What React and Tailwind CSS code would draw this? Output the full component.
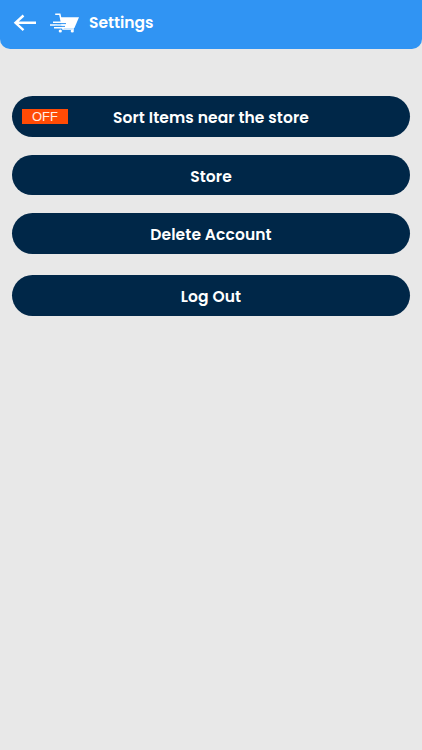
import React, { useState } from 'react';

const actions = [
  { label: 'Store', className: 'mt-[18px]' },
  { label: 'Delete Account', className: 'mt-[18px]' },
  { label: 'Log Out', className: 'mt-[21.5px]' },
];

function BackArrow() {
  return (
    <svg width="24" height="18" viewBox="0 0 24 18" fill="none" stroke="white" strokeWidth="2.4">
      <path d="M23 8.8H3M10.5 1.5L2.5 8.8l8 7.3" />
    </svg>
  );
}

function CartLogo() {
  return (
    <svg width="30" height="20" viewBox="0 0 30 20" fill="none">
      <path d="M5.2 1.2h4.6l3.2 14.8h11" stroke="white" strokeWidth="1.6" />
      <path d="M10.2 4.2H29l-4.6 10.8H13z" fill="white" />
      <circle cx="10.3" cy="18" r="1.6" fill="white" />
      <circle cx="22.3" cy="18" r="1.6" fill="white" />
      {/* speed lines */}
      <path d="M3 9.2h10M0 12h14M4 14.8h8" stroke="white" strokeWidth="1.4" />
      <path d="M7 10.6h9M5 13.4h10" stroke="#3094f3" strokeWidth="1" />
    </svg>
  );
}

function App() {
  const [sortNearby, setSortNearby] = useState(false);

  return (
    <div className="min-h-screen bg-[#e8e8e8] font-['Poppins','Inter',sans-serif] text-white">
      <header className="flex h-[49px] items-center rounded-b-[10px] bg-[#3094f3] pb-[4px] pl-[13px]">
        <button type="button" aria-label="Back"><BackArrow /></button>
        <div className="ml-[13px]"><CartLogo /></div>
        <h1 className="ml-[9px] text-[15.5px] leading-5 font-semibold">Settings</h1>
      </header>

      <main className="flex flex-col px-3 pt-[47px]">
        <button
          type="button"
          onClick={() => setSortNearby(!sortNearby)}
          className="grid h-[40.5px] grid-cols-[46px_1fr_46px] items-center rounded-full bg-[#002748] px-[10px] text-[15.5px] font-semibold tracking-[0.1px]"
        >
          <span className="h-[15px] bg-[#ff4b05] text-center font-['Liberation_Sans',sans-serif] text-[13px] leading-[15px] font-normal tracking-normal text-[#ffeee4]">
            {sortNearby ? 'ON' : 'OFF'}
          </span>
          <span className="pt-[3px]">Sort Items near the store</span>
        </button>
        {actions.map((a) => (
          <button
            key={a.label}
            type="button"
            className={`h-[40.5px] rounded-full bg-[#002748] pt-[3px] text-[15.5px] font-semibold tracking-[0.1px] ${a.className}`}
          >
            {a.label}
          </button>
        ))}
      </main>
    </div>
  );
}

export default App;
